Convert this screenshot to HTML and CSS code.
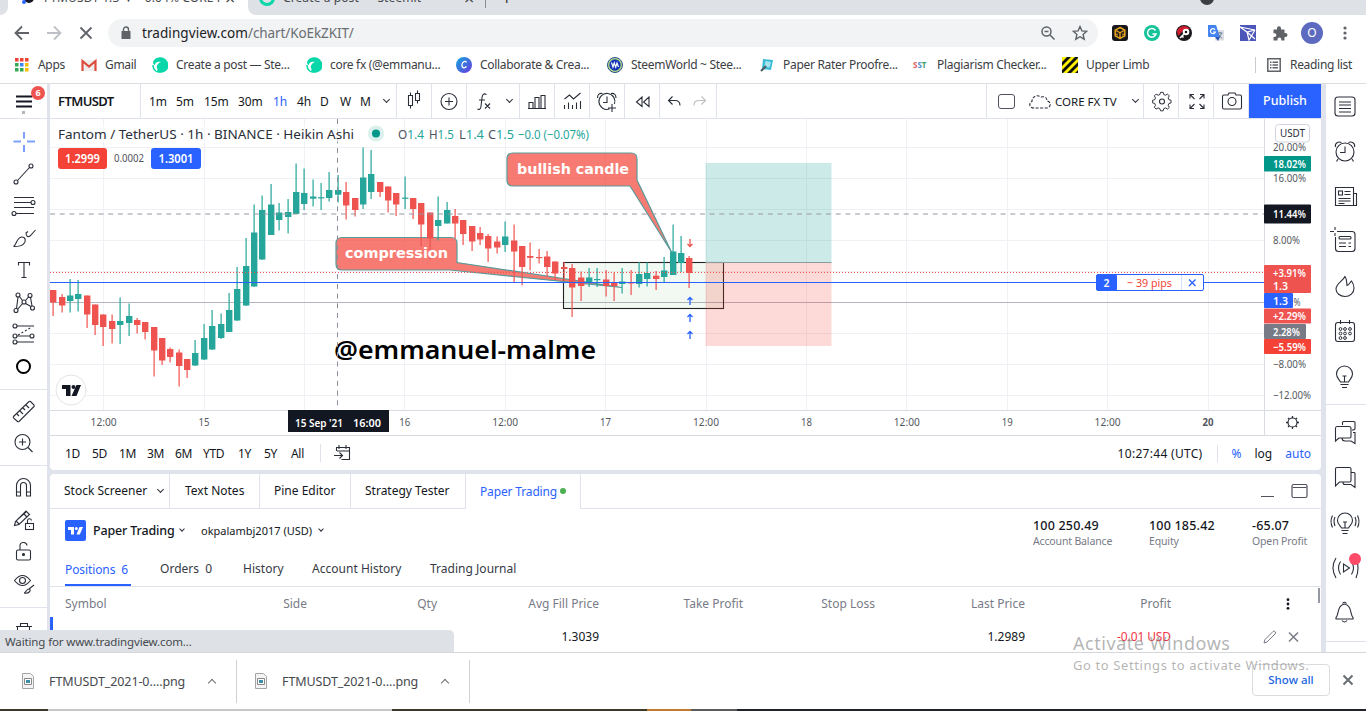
FILE: index.html
```html
<!DOCTYPE html>
<html lang="en">
  <head>
    <meta charset="utf-8">
    <title>FTMUSDT 1.3 — CORE FX TV</title>
    <link rel="stylesheet" href="styles.css">
  </head>
  <body>
    <!-- browser chrome -->
    <div class="tabstrip">
      <div class="tab tab-left"></div>
      <div class="tab tab-active">
        <svg class="tab-ico" width="16" height="16" viewBox="0 0 16 16"><circle cx="9" cy="8" r="5" fill="#131722"/><circle cx="4" cy="12" r="2" fill="#2962ff"/></svg>
        <span class="tab-text">FTMUSDT 1.3 ▼ −0.04% CORE FX</span>
        <span class="tab-x">×</span>
      </div>
      <div class="tab tab-idle">
        <svg class="tab-ico" width="16" height="16" viewBox="0 0 16 16"><circle cx="8" cy="8" r="6.5" fill="none" stroke="#07d7a9" stroke-width="3"/></svg>
        <span class="tab-text">Create a post — Steemit</span>
        <span class="tab-x">×</span>
      </div>
      <div class="tab-new">+</div>
      <div class="tab-dot"></div>
    </div>

    <div class="toolbar">
      <svg width="104" height="34" viewBox="0 0 104 34" fill="none" stroke="#5f6368" stroke-width="1.8">
        <path d="M29 18H16M22 11.500l-6.500 6.500 6.500 6.500"/>
        <path d="M47 18h13M54 11.500l6.500 6.500-6.500 6.500" stroke="#bdc1c6"/>
        <path d="M80.500 12.500l11 11M91.500 12.500l-11 11"/>
      </svg>
      <div class="omnibox">
        <svg width="10" height="14" viewBox="0 0 10 14"><path d="M0.500 5h9v8h-9z" fill="#5f6368"/><path d="M2.500 6V3.500a2.500 2.500 0 0 1 5 0V6" fill="none" stroke="#5f6368" stroke-width="1.400"/></svg>
        <span class="url"><b>tradingview.com</b>/chart/KoEkZKIT/</span>
        <svg width="16" height="16" viewBox="0 0 16 16" fill="none" stroke="#5f6368" stroke-width="1.500"><circle cx="6.500" cy="6.500" r="4.500"/><path d="M10 10l4.500 4.500M4.500 6.500h4"/></svg>
        <svg width="16" height="16" viewBox="0 0 16 16" fill="none" stroke="#5f6368" stroke-width="1.400"><path d="M8 1.500l1.900 4.400 4.800.4-3.600 3.200 1.100 4.700L8 11.700l-4.200 2.500 1.100-4.700L1.300 6.300l4.800-.4z"/></svg>
      </div>
      <div class="extensions">
        <svg width="16" height="16" viewBox="0 0 16 16"><rect width="16" height="16" rx="3" fill="#17181c"/><path d="M8 2.500l4.800 2.700v5.600L8 13.500l-4.800-2.700V5.200z" fill="none" stroke="#f0a81c" stroke-width="1.500"/><path d="M4 5.500l4 2.300 4-2.300M8 8v5M5 8.500v2M11 8.500v2" stroke="#f0a81c" stroke-width="1.300" fill="none"/></svg>
        <svg width="16" height="16" viewBox="0 0 16 16"><circle cx="8" cy="8" r="8" fill="#15c39a"/><path d="M11.500 5.500A4.300 4.300 0 1 0 12 9H8.500" fill="none" stroke="#fff" stroke-width="1.500"/></svg>
        <svg width="16" height="16" viewBox="0 0 16 16"><circle cx="8" cy="8" r="8" fill="#1b1b1f"/><path d="M1 6a7.500 7.500 0 0 1 13-2L8 5 2 11z" fill="#d21d30"/><circle cx="10" cy="7" r="2.300" fill="none" stroke="#fff" stroke-width="2"/><path d="M8.500 8.500L4 13M6 11l1.500 1.500" stroke="#fff" stroke-width="1.700"/></svg>
        <svg width="16" height="16" viewBox="0 0 16 16"><rect x="7" y="5" width="9" height="10.500" fill="#dcdfe3"/><path d="M0 0h8l4 12H1a1 1 0 0 1-1-1z" fill="#4384f3"/><path d="M7 4.800A2.500 2.500 0 1 0 7.300 7H5" fill="none" stroke="#fff" stroke-width="1.200"/><path d="M9.500 8h5M12 7v1M13.500 8c-.5 2-1.500 3.500-3 4.500M11 10l3 3.500" fill="none" stroke="#6a7d98"/><path d="M7 12h5l-2 4z" fill="#2a55b8"/></svg>
        <svg width="16" height="16" viewBox="0 0 16 16"><rect width="16" height="16" fill="#4c55b8"/><path d="M0 2l15 3-8 2zM7 7l2 8 6-10M7 7l8 7" fill="none" stroke="#fff" stroke-width="1.200"/></svg>
        <svg width="16" height="16" viewBox="0 0 16 16"><path d="M1.500 4.500H5V3.300a2 2 0 0 1 4 0v1.200h3.500V8h1a2 2 0 0 1 0 4h-1v3.500H9.300v-1a1.900 1.900 0 0 0-3.800 0v1h-4V12h1a1.900 1.900 0 0 0 0-3.800h-1z" fill="#5f6368"/></svg>
      </div>
      <div class="avatar">O</div>
      <svg width="4" height="14" viewBox="0 0 4 14" fill="#5f6368"><circle cx="2" cy="2" r="1.600"/><circle cx="2" cy="7" r="1.600"/><circle cx="2" cy="12" r="1.600"/></svg>
    </div>

    <div class="bookmarks">
      <svg width="14" height="14" viewBox="0 0 14 14"><path d="M0 0h3.500v3.500H0zM5 0h3.500v3.500H5zM10 0h3.500v3.500H10z" fill="#ea4335"/><path d="M0 5h3.500v3.500H0zM0 10h3.500v3.500H0zM5 10h3.500v3.500H5z" fill="#34a853"/><path d="M5 5h3.500v3.500H5z" fill="#4285f4"/><path d="M10 5h3.500v3.500H10zM10 10h3.500v3.500H10z" fill="#fbbc05"/></svg>
      <span>Apps</span>
      <svg width="16" height="16" viewBox="0 0 16 16"><path d="M1 3h14v11H1z" fill="#eee"/><path d="M1.500 14V4L8 9.500 14.500 4v10" fill="none" stroke="#dd4b3e" stroke-width="2.200"/></svg>
      <span>Gmail</span>
      <svg width="16" height="16" viewBox="0 0 16 16"><path d="M1 5A8 8 0 0 1 15 4a7 7 0 0 1-3 11c-5 2-8 0-9-1 3 0 3-1 2-3-1-2 1-5 4-6-4-1-6 1-6 3C2 8 1 7 1 5z" fill="#07d7a9"/><path d="M1 8c0 3 1 5 3 6" fill="none" stroke="#07d7a9" stroke-width="1.500"/></svg>
      <span>Create a post — Ste...</span>
      <svg width="16" height="16" viewBox="0 0 16 16"><path d="M1 5A8 8 0 0 1 15 4a7 7 0 0 1-3 11c-5 2-8 0-9-1 3 0 3-1 2-3-1-2 1-5 4-6-4-1-6 1-6 3C2 8 1 7 1 5z" fill="#07d7a9"/><path d="M1 8c0 3 1 5 3 6" fill="none" stroke="#07d7a9" stroke-width="1.500"/></svg>
      <span>core fx (@emmanu...</span>
      <svg width="16" height="16" viewBox="0 0 16 16"><defs><linearGradient id="cv" x1="0" y1="0" x2="1" y2="1"><stop offset="0" stop-color="#12a8dc"/><stop offset="1" stop-color="#6a38e0"/></linearGradient></defs><circle cx="8" cy="8" r="8" fill="url(#cv)"/><path d="M10.500 5.500c-1-2-4-1-4.500 2s2 4.500 4.500 2" fill="none" stroke="#fff" stroke-width="1.300"/></svg>
      <span>Collaborate &amp; Crea...</span>
      <svg width="16" height="16" viewBox="0 0 16 16"><circle cx="8" cy="8" r="7.500" fill="#b9dc82" stroke="#24508c"/><circle cx="8" cy="8" r="5.700" fill="#1536b8"/><path d="M4.500 5.500L6 10l1.300-4L8.700 10 10 6l1.500 4" fill="none" stroke="#fff" stroke-width="1.200"/></svg>
      <span>SteemWorld ~ Stee...</span>
      <svg width="16" height="16" viewBox="0 0 16 16"><path d="M4 2l10 1-2 10-9-1z" fill="#38bcd6"/><path d="M6.500 4l5.500 1-1.500 5.500-5-1z" fill="#a6e3ee"/><path d="M7 9l-5 5" stroke="#4c5a62" stroke-width="2"/></svg>
      <span>Paper Rater Proofre...</span>
      <b class="sst"><i class="s1">S</i><i class="s2">S</i><i class="s3">T</i></b>
      <span>Plagiarism Checker...</span>
      <svg width="16" height="16" viewBox="0 0 16 16"><path d="M0 0h16v16H0z" fill="#fdf100"/><path d="M0 5l5-5h4L0 9zM0 13L13 0h3v1L1 16H0zM5 16L16 5v4l-7 7zM13 16l3-3v3z" fill="#111"/></svg>
      <span>Upper Limb</span>
      <div class="reading">
        <svg width="14" height="14" viewBox="0 0 14 14" fill="none" stroke="#5f6368" stroke-width="1.500"><path d="M.8.800h12.400v12.400H.8zM3 4.200h1.500M3 7h1.500M3 9.800h1.500M5.500 4.200H11M5.500 7H11M5.500 9.800H11"/></svg>
        <span>Reading list</span>
      </div>
    </div>

    <div class="app">
      <!-- drawing tools -->
      <div class="tools">
        <div class="menu">
          <svg width="18" height="20" viewBox="0 0 18 20"><path d="M1 2.500h16M1 7.500h16M1 12.500h16" stroke="#131722" stroke-width="2"/><rect x="7" y="17" width="3" height="3" fill="#b2b5be"/></svg>
          <span class="menu-badge">6</span>
        </div>
        <div class="tool-group">
          <svg viewBox="0 0 28 28"><path d="M14 4v6.500M14 17v7M3.500 13.500H11M17 13.500h8" stroke="#7da0ff" stroke-width="2"/></svg>
          <svg viewBox="0 0 28 28"><circle cx="6" cy="22" r="2"/><circle cx="21" cy="6" r="2"/><path d="M7.500 20.500l12-13"/></svg>
          <svg viewBox="0 0 28 28"><path d="M4 5.500h20M4 10.500h17M4 15.500h20M6 21.500h18" /><circle cx="23" cy="10.500" r="2" fill="#fff"/><circle cx="4" cy="21.500" r="2" fill="#fff"/></svg>
          <svg viewBox="0 0 28 28"><path d="M3.500 22.500c3-1 3-9 8-9.500 4-.3 5 4 2 7-2 2.500-6 2.500-10 2.500zM16 8.500c0 4 2 5 4 3.500l5.500-6M16 9l2-1.500"/></svg>
          <svg viewBox="0 0 28 28"><path d="M8.500 9.500v-3h11v3M14 6.500v15M11.500 21.500h5"/></svg>
          <svg viewBox="0 0 28 28"><circle cx="6" cy="22.500" r="2"/><circle cx="8" cy="7" r="2"/><circle cx="14" cy="14" r="2"/><circle cx="20" cy="7.500" r="2"/><circle cx="22.500" cy="20" r="2"/><path d="M6.500 20.500L8 9M9.500 8.500l3 4M15.500 12.500l3-3.500M20.500 9.500l1.500 8.500M7.500 21.500l5-6M15.500 15.500l5.500 3"/></svg>
          <svg viewBox="0 0 28 28"><path d="M6 6h18M6 16h14M6 22h18"/><path d="M8 15L22 7" stroke-dasharray="2 2"/><circle cx="5" cy="6" r="2" fill="#fff"/><circle cx="5" cy="16" r="2" fill="#fff"/><circle cx="22" cy="16" r="2" fill="#fff"/><circle cx="5" cy="22" r="2" fill="#fff"/></svg>
          <svg viewBox="0 0 28 28"><circle cx="13.500" cy="14.500" r="6.500" stroke="#000" stroke-width="2"/></svg>
        </div>
        <div class="tool-group">
          <svg viewBox="0 0 28 28"><path d="M3.500 19.500L19 4.500q1-.5 1.500 0l3.500 3.500q.5 1 0 1.500L9 24.500q-1 .5-1.500 0L3.500 21q-.5-.7 0-1.500zM7 17l2 2M10 14l3 3M13 11l2 2M16 8l3 3"/></svg>
          <svg viewBox="0 0 28 28"><circle cx="12.500" cy="13" r="7.500"/><path d="M12.500 9.500v7M9 13h7M18 18.500l4.500 4.500"/></svg>
        </div>
        <div class="tool-group">
          <svg viewBox="0 0 28 28"><path d="M7 22.500V12a6.500 6.500 0 0 1 14 0v10.500h-4V12a2.500 2.500 0 0 0-6 0v10.500zM7 18.500h4M17 18.500h4" transform="translate(-.5 -.5)"/></svg>
          <svg viewBox="0 0 28 28"><path d="M4.500 19.500l1-4L16 5l3.500 3.500L9 18.500zM13.500 7.500L17 11M6 15l3 3M8 13l8-7"/><rect x="15.500" y="17.500" width="8" height="6"/><path d="M17.500 17v-2a2 2 0 0 1 4-.5M19.500 20v1"/></svg>
          <svg viewBox="0 0 28 28"><rect x="6.500" y="12" width="14" height="10" rx="1.500"/><path d="M10 12V8.500a3.500 3.500 0 0 1 7-1"/><circle cx="13.500" cy="16.500" r="1" fill="#2a2e39"/></svg>
          <svg viewBox="0 0 28 28"><path d="M4.500 10.500q8-10 16 0-8 10-16 0z"/><circle cx="12.500" cy="10.500" r="3"/><path d="M14 23c2 0 2-4 5-4 3 1 0 5-5 4zM19 19l5-4"/></svg>
        </div>
        <div class="tool-group">
          <svg viewBox="0 0 28 28"><path d="M6 9.500h16M10.500 9V6.500h7V9M7.500 9.500v12h12v-12M11.500 13v6M15.500 13v6"/></svg>
        </div>
      </div>

      <div class="center">
        <div class="chart-area">
          <div class="topbar">
            <div class="cell symbol">FTMUSDT</div>
            <div class="cell intervals"><span>1m</span><span>5m</span><span>15m</span><span>30m</span><span class="on">1h</span><span>4h</span><span>D</span><span>W</span><span>M</span><i class="chev"></i></div>
            <div class="cell ic"><svg viewBox="0 0 28 28"><path d="M8.500 9.500h4v10h-4zM10.500 6.500v3M10.500 19.500v3M15.500 7.500h4v7h-4zM17.500 4.500v3M17.500 14.500v3" transform="translate(0 -1)"/></svg></div>
            <div class="cell ic"><svg viewBox="0 0 28 28"><circle cx="14" cy="14.500" r="8"/><path d="M14 10.500v8M10 14.500h8"/></svg></div>
            <div class="cell fx"><svg viewBox="0 0 28 28"><path d="M15.500 7.500c-3-1.500-4 0-4.500 3l-1 9c-.5 3-2 3.500-3.500 2.500M8 13h6M14 16.500l5 5M19 16.500l-5 5"/></svg><i class="chev"></i></div>
            <div class="cell ic"><svg viewBox="0 0 28 28"><path d="M6 21.500v-6h4v6zM12 21.500v-11h4v11zM18 21.500v-13h4v13zM5 21.500h18" /></svg></div>
            <div class="cell ic"><svg viewBox="0 0 28 28"><path d="M6.500 12l5-4 4 4 7-6M6.500 18v4M10.500 15.500V22M14.500 18v4M18.500 15.500V22M22.500 14v8"/></svg></div>
            <div class="cell ic"><svg viewBox="0 0 28 28"><path d="M16.500 22a8 8 0 1 1 5-5M14 9.500v6h-4M4.500 11c0-4 2-5 5-4.500M23 11c0-4-2-5-5-4.500M19 17v8M15 21h8"/></svg></div>
            <div class="cell ic"><svg viewBox="0 0 28 28"><path d="M14 10v9.500L8.500 15zM21 10v9.500L15.500 15z"/></svg></div>
            <div class="cell undo"><svg viewBox="0 0 28 28"><path d="M12.500 9.500l-4 4 4 4M9 13.500h6q5 0 5 5"/></svg><svg class="dim" viewBox="0 0 28 28"><path d="M15.500 9.500l4 4-4 4M19 13.500h-6q-5 0-5 5"/></svg></div>
            <div class="cell grow"></div>
            <div class="cell layout"><i class="square"></i><svg viewBox="0 0 28 28"><path d="M8 21c-5 0-5.500-5-2-6.500 0-5 5-7.500 9-4.500 4-1 6 1 6 4 5 1 4 7-1 7z" stroke-dasharray="3 1.500"/></svg><span>CORE FX TV</span><i class="chev"></i></div>
            <div class="cell ic shift"><svg viewBox="0 0 28 28"><circle cx="14" cy="14.500" r="2.500"/><path d="M12.500 5.500h3l.7 2.500 2 .8 2.300-1.300 2 2-1.300 2.300.8 2 2.500.7v3l-2.500.7-.8 2 1.300 2.300-2 2-2.300-1.300-2 .8-.7 2.500h-3l-.7-2.500-2-.8-2.300 1.300-2-2 1.300-2.300-.8-2-2.500-.7v-3l2.500-.7.8-2-1.300-2.300 2-2 2.300 1.300 2-.8z" transform="translate(1.500 .5) scale(.88)"/></svg></div>
            <div class="cell ic shift"><svg viewBox="0 0 28 28"><path d="M7 11.500v-4h4M7.500 8l4 4M17 7.500h4v4M20.500 8l-4 4M7 17.500v4h4M7.500 21l4-4M17 21.500h4v-4M20.500 21l-4-4"/></svg></div>
            <div class="cell ic shift"><svg viewBox="0 0 28 28"><path d="M10 8l1-2h6l1 2h4q1.500 0 1.500 1.500v11q0 1.500-1.500 1.500H6q-1.500 0-1.500-1.500v-11Q4.500 8 6 8z"/><circle cx="14" cy="14.500" r="4"/></svg></div>
            <div class="publish">Publish</div>
          </div>
          <svg class="chart" id="chart" width="1271" height="317" viewBox="50 119 1271 317"></svg>
          <div class="rangebar">
            <div class="ranges"><span>1D</span><span>5D</span><span>1M</span><span>3M</span><span>6M</span><span>YTD</span><span>1Y</span><span>5Y</span><span>All</span></div>
            <div class="goto"><svg viewBox="0 0 28 28"><path d="M7.500 12V8.500h13v12h-8M10 6v4M17 6v4M8 12h12M5 16.500h8M10.500 13.500l3 3-3 3"/></svg></div>
            <div class="clock">10:27:44 (UTC)</div>
            <div class="scale"><span class="on">%</span><span>log</span><span class="on">auto</span></div>
          </div>
        </div>

        <div class="panel">
          <div class="ptabs">
            <div class="ptab">Stock Screener<i class="chev"></i></div>
            <div class="ptab">Text Notes</div>
            <div class="ptab">Pine Editor</div>
            <div class="ptab">Strategy Tester</div>
            <div class="ptab ptab-on">Paper Trading<i class="live"></i></div>
            <div class="pwin"><svg width="48" height="20" viewBox="4 0 48 20" fill="none" stroke="#50535e" stroke-width="1.200"><path d="M5 15.500h13M36.500 6.500h14"/><rect x="36" y="3.500" width="15" height="13" rx="1.500"/></svg></div>
          </div>
          <div class="broker">
            <svg width="21" height="21" viewBox="0 0 21 21"><rect width="21" height="21" rx="2" fill="#2962ff"/><path d="M3 7h6v7.500H6V10H3zM14.500 7H18l-3.200 7.500h-3.300z" fill="#fff"/><circle cx="11.300" cy="8.500" r="1.500" fill="#fff"/></svg>
            <span class="broker-name">Paper Trading</span><i class="chev small"></i>
            <span class="account">okpalambj2017 (USD)</span><i class="chev small"></i>
            <div class="stats">
              <div><b>100 250.49</b><small>Account Balance</small></div>
              <div><b>100 185.42</b><small>Equity</small></div>
              <div><b>-65.07</b><small>Open Profit</small></div>
            </div>
          </div>
          <div class="subtabs">
            <span class="sub-on">Positions&nbsp; 6</span><span>Orders&nbsp; 0</span><span>History</span><span>Account History</span><span>Trading Journal</span>
          </div>
          <div class="row head">
            <span>Symbol</span><span>Side</span><span>Qty</span><span>Avg Fill Price</span><span>Take Profit</span><span>Stop Loss</span><span>Last Price</span><span>Profit</span>
            <svg width="4" height="12" viewBox="0 0 4 12" fill="#131722"><circle cx="2" cy="1.700" r="1.400"/><circle cx="2" cy="6" r="1.400"/><circle cx="2" cy="10.300" r="1.400"/></svg>
            <i class="scroll"></i>
          </div>
          <div class="row data">
            <span></span><span></span><span></span><span>1.3039</span><span></span><span></span><span>1.2989</span><span class="loss">-0.01 USD</span>
            <svg class="acts" width="40" height="14" viewBox="0 0 40 14" fill="none" stroke="#787b86" stroke-width="1"><path d="M1 13l1-3.500L10 1.500q1.500-1 2.500.5.500 1-.5 2L4 12z"/><path d="M26 2.500l9 9M35 2.500l-9 9" stroke-width="1.500"/></svg>
          </div>
        </div>
      </div>

      <!-- widget bar -->
      <div class="widgets">
        <div class="wgroup">
          <svg viewBox="0 0 28 28"><rect x="4" y="5" width="20" height="19" rx="3"/><path d="M8 10h12M8 13h12M8 16.500h12M8 20h12"/></svg>
          <svg viewBox="0 0 28 28"><circle cx="14" cy="15" r="9"/><path d="M14 9.500v6h-5M4.500 10c-1-4 3-6 6-4.500M23.500 10c1-4-3-6-6-4.500M7 22l-1.500 2.500M21 22l1.500 2.500"/></svg>
          <svg viewBox="0 0 28 28"><path d="M4.500 23.500v-18h18v18zM22.500 11.500h3v12h-3M13.500 9.500h6M13.500 12.500h6M7.500 16.500h12M7.500 19h12M7.500 21.500h6"/><rect x="7.500" y="9" width="4" height="4"/></svg>
          <svg viewBox="0 0 28 28"><path d="M9 4.500h12q3 0 3 3v14q0 3-3 3H7.500q-3 0-3-3V10M4 0v3M4 6v3M-1 4.500h4M6 4.500h3"/><rect x="8" y="9.500" width="12" height="2.500" rx="1"/><path d="M8 16h7M17.500 16H20M8 19.500h7M17.500 19.500H20"/></svg>
          <svg viewBox="0 0 28 28"><path d="M14 4.500C12 9 5 11.500 5 17c0 4 4 7.500 9 7.500s9-3.500 9-8.500c0-3-1-5-2.500-7-1.500 1-2 4-4.500 4.500C15.500 10 16 7 14 4.500z"/></svg>
          <svg viewBox="0 0 28 28"><rect x="4.500" y="5.500" width="19" height="19" rx="2.500"/><path d="M9.500 3v4M18.500 3v4"/><g stroke-width="1"><circle cx="9.500" cy="12" r="1.400"/><circle cx="14" cy="12" r="1.400"/><circle cx="19" cy="12" r="1.400"/><circle cx="9.500" cy="16.500" r="1.400"/><circle cx="14" cy="16.500" r="1.400"/><circle cx="19" cy="16.500" r="1.400"/><circle cx="9.500" cy="21" r="1.400"/><circle cx="14" cy="21" r="1.400"/></g></svg>
          <svg viewBox="0 0 28 28"><path d="M9.500 19c-1-2.500-4-4-4-8a8 8 0 0 1 16 0c0 4-3 5.500-4 8zM9.500 21.500h8M11 24.500h5M11.500 13h4M13.500 13v5.500" transform="translate(0 1)"/></svg>
        </div>
        <div class="wgroup">
          <svg viewBox="0 0 28 28"><path d="M11.500 6V3.500q0-1 1-1h10.500q1 0 1 1v6q0 1.500-3 1.500M6 7.500h12q2 0 2 2v8q0 1.500-1.500 1.500H8l-3.500 3V9.500q0-2 1.500-2zM22 13.500h2v11L20 22h-6q-3 0-3-3"/></svg>
          <svg viewBox="0 0 28 28"><path d="M6 3.500h12.500q1.500 0 1.500 1.500v11.500q0 1.500-1.500 1.500H8.500l-4 4V5q0-1.500 1.500-1.500zM20 8.500h3q1 0 1 1v14l-4-3h-6q-2 0-2-2"/></svg>
          <svg viewBox="0 0 28 28"><path d="M11 19c-1-2.500-4-3.500-4-7.500a7.500 7.500 0 0 1 15 0c0 4-3 5-4 7.500zM11 21.500h7M12 24.500h5M14.500 13.500v5M12.500 13h4M4.500 8q-2 4 0 9M2 6.500q-3 6 0 12M24.500 8q2 4 0 9M27 6.500q3 6 0 12" transform="translate(-.5 0)"/></svg>
          <svg viewBox="0 0 28 28"><path d="M12.500 10v8l6-4zM9.500 7.500q-4 6.500 0 13M5 4q-6 9.500 0 20M20.500 7.500q4 6.500 0 13M25 4q4 9.500 0 20"/><circle cx="24" cy="5" r="6" fill="#ff4a68" stroke="none"/></svg>
          <svg viewBox="0 0 28 28"><path d="M5 19.500c3-3 1-12 8.500-13.500 7.500 1.500 5.500 10.500 8.500 13.500v1.500H5zM11.500 5.500q2-2.500 4 0M11 22.500q2.500 3 5 0" transform="translate(0 -1)"/></svg>
        </div>
        <div class="wgroup"></div>
      </div>

      <div class="status">Waiting for www.tradingview.com...</div>
    </div>

    <div class="shelf">
      <div class="dl"><svg width="12" height="16" viewBox="0 0 12 16"><path d="M.5.500h8l3 3v12H.5z" fill="#f4f4f4" stroke="#a5a5a5"/><path d="M2.500 5.500h7v6h-7z" fill="#fff" stroke="#888"/><path d="M4 7h4v3H4z" fill="#3d8fa8"/></svg><span>FTMUSDT_2021-0....png</span><i class="up"></i></div>
      <div class="dl"><svg width="12" height="16" viewBox="0 0 12 16"><path d="M.5.500h8l3 3v12H.5z" fill="#f4f4f4" stroke="#a5a5a5"/><path d="M2.500 5.500h7v6h-7z" fill="#fff" stroke="#888"/><path d="M4 7h4v3H4z" fill="#3d8fa8"/></svg><span>FTMUSDT_2021-0....png</span><i class="up"></i></div>
      <div class="showall">Show all</div>
      <svg width="12" height="12" viewBox="0 0 12 12"><path d="M1.500 1.500l9 9M10.500 1.500l-9 9" stroke="#6b6e72" stroke-width="2"/></svg>
      <div class="activate"><p class="a1">Activate Windows</p><p class="a2">Go to Settings to activate Windows.</p></div>
    </div>
    <div class="taskbar"><i></i><i class="light"></i><i></i><i class="orange"></i><i class="dark"></i></div>
    <script src="chart.js"></script>
  </body>
</html>
```
FILE: styles.css
```css
body { margin: 0; height: 711px; overflow: hidden; background: #fff; font-family: "Noto Sans", "Open Sans", sans-serif; font-size: 12px; color: #131722 }
svg { display: block; flex: none }
i { font-style: normal }

/* browser chrome */
.tabstrip { display: flex; position: relative; height: 15px; background: linear-gradient(90deg, #fff 260px, #dee1e6 260px); overflow: hidden; font-size: 12px; line-height: 16px; color: #45494d }
.tab { display: flex; box-sizing: border-box; height: 15px }
.tab-left { width: 8px; border-radius: 0 0 8px 0; background: #dee1e6 }
.tab-active { width: 240px; padding-left: 12px; background: #fff }
.tab-idle { width: 239px; padding-left: 11px; border-radius: 0 0 0 8px; background: #dee1e6 }
.tab-ico { margin-top: -10px }
.tab-text { width: 178px; margin: -10px 0 0 8px; white-space: nowrap; overflow: hidden; letter-spacing: .1px }
.tab-x { margin: -10px 0 0 3px; font-size: 18px }
.tab-idle .tab-x { box-sizing: border-box; width: 22px; border-right: 1px solid #8a8d91; height: 18px }
.tab-new { margin: -10px 0 0 14px; font-size: 20px }
.tab-dot { position: absolute; left: 1200px; top: -9px; width: 14px; height: 14px; border-radius: 50%; background: #3c4043 }

.toolbar { display: flex; align-items: center; height: 36px }
.toolbar > svg:first-child { align-self: flex-start; margin-right: 4px }
.omnibox { display: flex; align-items: center; box-sizing: border-box; width: 990px; height: 28px; padding: 0 10px 0 13px; border-radius: 14px; background: #f1f3f4 }
.url { flex: 1; margin-left: 11px; font-size: 13.500px; color: #6a6e73; letter-spacing: -.1px }
.url b { font-weight: 400; color: #202124; letter-spacing: .08px }
.omnibox svg + svg { margin-left: 16px }
.extensions { display: flex; gap: 16px; margin-left: 14px }
.avatar { width: 22px; height: 22px; margin: 0 20px 0 13px; border-radius: 50%; background: #5c6bc0; color: #fff; line-height: 22px; text-align: center; font-size: 12px }

.bookmarks { display: grid; grid-template-columns: 23px 43px 24px 47px 24px 130px 24px 126px 24px 127px 24px 128px 24px 130px 24px 125px 24px 1fr auto; align-items: center; box-sizing: border-box; height: 33px; padding: 0 0 5px 15px; border-bottom: 1px solid #dcdde1; color: #3c4043; white-space: nowrap; letter-spacing: -.3px }
.sst { font-size: 8px; letter-spacing: 0 }
.s1 { color: #e06060 }
.s2 { color: #4a90d0 }
.s3 { color: #3fa070 }
.reading { display: flex; align-items: center; gap: 9px; height: 16px; padding: 0 14px 0 11px; border-left: 1px solid #c8cbd0 }

/* app frame */
.app { display: flex; position: relative; height: 568px; background: #e0e3eb }
.tools { width: 47px; margin-right: 3px; overflow: hidden; background: #fff }
.menu { position: relative; height: 34px; border-bottom: 1px solid #e0e3eb }
.menu svg { padding: 10px 0 0 15px }
.menu-badge { position: absolute; left: 31px; top: 2px; width: 14px; height: 14px; border-radius: 50%; background: #ef5350; color: #fff; font-size: 9px; font-weight: 700; line-height: 14px; text-align: center }
.tool-group { padding: 7px 0; border-bottom: 1px solid #e0e3eb }
.tool-group:nth-child(3) { padding: 5px 0 6px }
.tool-group:nth-child(4) { padding: 6px 0 7px }
.tool-group svg, .wgroup svg { width: 28px; height: 28px; margin: 0 auto; padding: 2px 0; fill: none; stroke: #2a2e39; stroke-width: 1.1 }
.tool-group svg { margin-left: 10px }

.center { width: 1271px; margin-right: 5px }
.chart-area { height: 386px; border-radius: 0 0 4px 4px; background: #fff; overflow: hidden }
.topbar { display: flex; box-sizing: border-box; height: 35px; border-bottom: 1px solid #e0e3eb }
.cell { display: flex; align-items: center; box-sizing: border-box; flex: none; border-right: 1px solid #e0e3eb }
.cell svg, .goto svg { width: 28px; height: 28px; fill: none; stroke: #2a2e39; stroke-width: 1.1 }
.ic { width: 35px; justify-content: center }
.shift { padding-left: 2px }
.symbol { width: 91px; padding-left: 8px; font-size: 13px; font-weight: 600; letter-spacing: -.6px }
.intervals { display: grid; width: 256px; padding-left: 8px; grid-template-columns: 27px 28px 34px 35px 24px 23px 20px 20px 22px 1fr; letter-spacing: -.1px }
.on { color: #2962ff }
.chev { width: 4px; height: 4px; margin: 0 0 3px 3px; border: solid #2a2e39; border-width: 0 1.2px 1.2px 0; transform: rotate(45deg) }
.intervals .chev { margin-left: 2px }
.fx { width: 53px; padding-left: 4px }
.fx .chev { margin-left: 8px }
.undo { width: 57px }
.undo svg + svg { margin-left: -2px }
.dim { opacity: .3 }
.grow { flex: 1 }
.layout { width: 157px; padding-left: 11px }
.square { width: 15px; height: 13px; margin-right: 11px; border: 1px solid #50535e; border-radius: 3px }
.layout span { width: 69px; letter-spacing: 0; font-size: 11.500px; white-space: nowrap }
.layout .chev { margin-left: 9px }
.layout svg { margin-right: 1px }
.publish { width: 72px; height: 34px; background: #2962ff; color: #fff; font-size: 12.500px; font-weight: 500; line-height: 34px; text-align: center }

/* chart */
.grid { stroke: #f0f1f4; stroke-width: 1 }
.axis { stroke: #d9dbe3; stroke-width: 1 }
.up-bar { fill: #26a69a }
.down-bar { fill: #ef5350 }
.lbl { font-size: 11px; fill: #555861 }
.lbl-b { font-size: 11px; font-weight: 600; fill: #fff }
.callout { fill: #f44336; fill-opacity: .7; stroke: #5a9a9a; stroke-width: 1.2 }
.callout-text { font: bold 14.500px "DejaVu Sans", sans-serif; fill: #fff }
.handle { font-size: 26px; font-weight: 600; fill: #000 }

.rangebar { display: flex; align-items: center; height: 34px }
.ranges { display: grid; grid-template-columns: 27px 27px 28px 28px 28px 35px 26px 27px 28px; padding-left: 15px; letter-spacing: -.3px }
.goto { margin-left: 1px; padding-left: 8px; border-left: 1px solid #e0e3eb; height: 18px; display: flex; align-items: center }
.clock { margin-left: auto; padding-right: 14px; letter-spacing: .3px }
.scale { display: flex; gap: 13px; padding: 0 10px 0 14px; border-left: 1px solid #e0e3eb }

/* bottom panel */
.panel { height: 178px; margin-top: 4px; border-radius: 4px 4px 0 0; background: #fff; overflow: hidden }
.ptabs { display: flex; height: 35px }
.ptab { display: flex; align-items: center; box-sizing: border-box; width: 91px; padding: 0 0 1px 14px; border-right: 1px solid #e0e3eb; border-bottom: 1px solid #e0e3eb; white-space: nowrap; letter-spacing: 0 }
.ptab:nth-child(1) { width: 120px }
.ptab:nth-child(2) { width: 90px; padding-left: 15px }
.ptab:nth-child(4) { width: 115px }
.ptab-on { width: 115px; border-bottom: 0; color: #2962ff; letter-spacing: -.15px }
.ptab .chev { margin-left: 11px }
.live { width: 6px; height: 6px; margin-left: 3px; border-radius: 50%; background: #4caf50 }
.pwin { display: flex; flex: 1; align-items: center; justify-content: flex-end; padding-right: 13px; border-bottom: 1px solid #e0e3eb }
.broker { display: flex; align-items: center; height: 43px; padding-left: 15px }
.broker-name { width: 81px; margin-left: 7px; font-size: 12.500px; font-weight: 500; letter-spacing: -.15px; white-space: nowrap }
.account { width: 112px; margin-left: 17px; font-size: 11px; letter-spacing: 0; white-space: nowrap }
.chev.small { margin-left: 6px; width: 3px; height: 3px }
.stats { display: grid; grid-template-columns: 116px 103px 69px; margin-left: auto; padding-top: 6px }
.stats b { display: block; font-size: 12.500px; font-weight: 500; line-height: 16px; letter-spacing: .2px }
.stats small { display: block; font-size: 10.500px; line-height: 15px; color: #787b86; white-space: nowrap; letter-spacing: -.15px }
.subtabs { display: grid; grid-template-columns: 66px 54px 40px 89px 90px; column-gap: 29px; box-sizing: border-box; height: 35px; padding-left: 15px; border-bottom: 1px solid #e0e3eb; line-height: 34px; white-space: nowrap; color: #363a45; letter-spacing: .02px }
.sub-on { color: #2962ff; border-bottom: 2px solid #2962ff; line-height: 35px; height: 32px; letter-spacing: -.1px }
.row { display: grid; grid-template-columns: 62px 180px 130px 162px 144px 132px 150px 146px; position: relative; padding-left: 15px; height: 33px; line-height: 33px; text-align: right; white-space: nowrap }
.row > span:first-child { text-align: left }
.head { color: #787b86 }
.head svg { position: absolute; left: 1236px; top: 11px }
.scroll { position: absolute; left: 1268px; top: 1px; width: 2px; height: 15px; background: #9598a1 }
.data { height: 36px; margin-top: -3px; line-height: 40px; border-left: 3px solid #2962ff; padding-left: 12px }
.data .acts { position: absolute; left: 1210px; top: 13px }
.loss { color: #f23645; letter-spacing: -.1px }

.widgets { width: 40px; background: #fff; overflow: hidden }
.wgroup { padding: 0 0 5px; border-bottom: 1px solid #e0e3eb }
.wgroup + .wgroup { padding: 6px 0 5px }
.wgroup:last-child { border: 0 }
.wgroup svg { padding: 8px 0 9px; margin-left: 5px; overflow: visible }
.status { position: absolute; left: 0; bottom: 0; width: 449px; height: 22px; padding-left: 5px; border-radius: 0 5px 0 0; background: #dee1e6; color: #45494d; font-size: 11.500px; line-height: 23px; letter-spacing: -.13px }

/* downloads */
.shelf { display: flex; align-items: center; position: relative; box-sizing: border-box; height: 57px; border-top: 1px solid #d5d7db; background: #fff }
.dl { display: flex; align-items: center; box-sizing: border-box; width: 233px; height: 43px; padding-left: 18px; border-right: 1px solid #cfd1d4; color: #45494d }
.dl:first-child { width: 237px; padding-left: 22px }
.dl span { width: 138px; margin-left: 15px; font-size: 12.500px; letter-spacing: -.1px; white-space: nowrap }
.up { width: 5px; height: 5px; margin: 4px 0 0 22px; border: solid #6b6e72; border-width: 1.500px 0 0 1.500px; transform: rotate(45deg) }
.showall { box-sizing: border-box; width: 78px; height: 32px; margin: 0 12px 2px auto; border: 1px solid #dadce0; border-radius: 4px; color: #1a66e0; font-size: 11.500px; font-weight: 500; line-height: 30px; text-align: center }
.shelf > svg { margin: 0 12px 2px 0 }
.activate { position: absolute; left: 1073px; top: -23px; color: rgba(130, 130, 130, .6); white-space: nowrap }
.activate p { margin: 0 }
.a1 { font-size: 18px; line-height: 26px; letter-spacing: .55px }
.a2 { font-size: 13px; line-height: 18px; letter-spacing: .6px }
.taskbar { display: flex; height: 2px; background: #20242a }
.taskbar i { width: 48px; background: #3c382b }
.taskbar .light { width: 344px; background: #c8c8c8 }
.taskbar i:nth-child(3) { width: 255px }
.taskbar .orange { width: 44px; background: #c07a30 }
.taskbar .dark { width: 46px; background: #5b5b5b }
```
FILE: chart.js
```js
// high, body top, body bottom, low, u = up / d = down
var bars = [
  [290, 290, 302.5, 316, 'd'], [294, 297, 305.5, 312.5, 'd'], [279, 295.5, 301, 312.5, 'u'], [280, 294, 299, 311.5, 'u'],
  [295.5, 295.5, 314.5, 328, 'd'], [304.5, 304.5, 325, 335, 'd'], [314.5, 314.5, 327, 346, 'd'], [314.5, 321, 329, 343.5, 'd'],
  [297.5, 321, 325, 344, 'u'], [303.5, 316, 323, 336, 'u'], [318, 320, 325, 333.5, 'd'], [322, 322, 332, 339.5, 'd'],
  [327, 327, 350.5, 376.5, 'd'], [338, 338, 360.5, 365, 'd'], [347.5, 349, 357, 362.5, 'd'], [349.5, 352.5, 366, 386.5, 'd'],
  [359, 359, 370, 378, 'd'], [340, 353, 365.5, 366, 'u'], [324, 338, 359.5, 360, 'u'], [310, 326, 349.5, 350, 'u'],
  [313.5, 324, 338, 339, 'u'], [293, 310, 332, 332, 'u'], [267, 289, 320.5, 321, 'u'], [238, 266, 305.5, 306, 'u'],
  [204.5, 232.5, 286.5, 287, 'u'], [195.5, 210, 259.5, 260, 'u'], [184, 204.5, 235, 235, 'u'], [203, 212.5, 220, 230.5, 'u'],
  [199, 212, 217, 233.5, 'u'], [163.5, 192, 214, 214, 'u'], [168.5, 193, 204, 210, 'u'], [179.5, 196.5, 198.7, 206.5, 'u'],
  [183, 197.2, 198.4, 210, 'u'], [172, 190, 198, 201.5, 'u'], [175, 190, 194.7, 202.5, 'u'], [182, 192, 205.5, 219.5, 'd'],
  [198, 198, 210, 216.5, 'd'], [147.5, 177.5, 204.5, 209, 'u'], [150, 174, 192, 199, 'u'], [182, 182, 192, 197, 'd'],
  [186.5, 186.5, 200.5, 212.5, 'd'], [193, 193, 204.5, 216, 'd'], [176.5, 197.6, 198.8, 209, 'u'], [198, 198, 209, 219, 'd'],
  [203, 203, 224.5, 246.5, 'd'], [212.5, 212.5, 238.5, 259.5, 'd'], [196.5, 220, 226, 240.5, 'u'], [202, 210, 223.5, 223.5, 'u'],
  [209, 216, 223.5, 238.5, 'd'], [220, 220, 234, 245, 'd'], [226, 226, 241.5, 251, 'd'], [227, 233, 239.5, 245, 'd'],
  [234, 236, 248.5, 262, 'd'], [236.5, 241.5, 247.5, 253.5, 'd'], [221.5, 236.5, 245, 252, 'u'], [224.5, 240.5, 251.5, 282.5, 'd'],
  [246, 246, 267, 285.5, 'd'], [242.5, 256, 257.8, 270.5, 'd'], [249, 257, 258.2, 263.5, 'd'], [251, 256.5, 267, 277, 'd'],
  [261.5, 261.5, 273.5, 280, 'd'], [262, 267, 269, 281, 'd'], [264, 268, 287.5, 317, 'd'], [271.5, 277.5, 286, 301, 'd'],
  [268, 277.5, 282, 287, 'u'], [268, 279, 280.2, 287, 'u'], [270, 279.5, 286, 296.5, 'd'], [272.5, 282, 286, 301, 'd'],
  [268, 281.5, 284, 293.5, 'u'], [270, 282, 283.5, 295, 'd'], [262, 274, 284, 287.5, 'u'], [262.5, 273, 279, 286.5, 'u'],
  [271, 275.7, 279, 290, 'd'], [257, 270.5, 277, 282.5, 'u'], [224.5, 251.5, 275, 275, 'u'], [236, 253, 263, 272, 'u'],
  [256, 258, 273, 288, 'd']
];
var out = '';

function line(x1, y1, x2, y2, attrs) {
  out += '<line x1="' + x1 + '" y1="' + y1 + '" x2="' + x2 + '" y2="' + y2 + '" ' + attrs + '/>';
}
function rect(x, y, w, h, attrs) {
  out += '<rect x="' + x + '" y="' + y + '" width="' + w + '" height="' + h + '" ' + attrs + '/>';
}
// w is the width that the label takes
function text(x, y, w, str, attrs) {
  out += '<text x="' + x + '" y="' + y + '" textLength="' + w + '" lengthAdjust="spacingAndGlyphs" ' + attrs + '>' + str + '</text>';
}

// grid
[147.5, 178.5, 209.5, 240.5, 271.5, 333.5, 364.5, 395.5].forEach(function (y) { line(50, y, 1264, y, 'class="grid"'); });
for (var g = 0; g < 12; g++) {
  var gx = Math.floor(103.6 + g * 100.4) + 0.5;
  line(gx, 119, gx, 410, 'class="grid"');
}
line(50, 302.5, 1264, 302.5, 'stroke="#b2b5be"');
rect(563.5, 262.5, 160, 46, 'fill="#4caf50" fill-opacity=".07" stroke="#222" stroke-width="1.1"');

// callouts go under the bars
out += '<path class="callout" d="M513 153H631q6 0 6 6V180L671.500 252 630 186H513q-6 0-6-6V159q0-6 6-6z"/>';
out += '<path class="callout" d="M342 237.500H451q6 0 6 6V262.500L622 287.500 450 270H342q-6 0-6-6V243.500q0-6 6-6z"/>';

bars.forEach(function (b, i) {
  var x = Math.round(53.2 + i * 8.37);
  var cls = 'class="' + (b[4] === 'u' ? 'up-bar' : 'down-bar') + '"';
  rect(x - 0.5, b[0], 1.2, b[3] - b[0], cls);
  rect(x - 3, b[1], 6.4, b[2] - b[1], cls);
});
text(517, 174, 112, 'bullish candle', 'class="callout-text"');
text(345, 258, 103, 'compression', 'class="callout-text"');
text(334, 359, 262, '@emmanuel-malme', 'class="handle"');

// long position
rect(705.5, 163, 126, 99.5, 'fill="#009688" fill-opacity=".2"');
rect(705.5, 262.5, 126, 83.5, 'fill="#f44336" fill-opacity=".2"');
line(705.5, 262.5, 831.5, 262.5, 'stroke="#8b9a9e"');

// order marks
out += '<path d="M690 239v7M687.500 244l2.500 2.500 2.500-2.500" fill="none" stroke="#ef5350" stroke-width="1.300"/>';
[297.5, 314.5, 331.5].forEach(function (y) {
  out += '<path d="M690 ' + (y + 7.5) + 'v-7M687.500 ' + (y + 2.5) + 'l2.500-2.500 2.500 2.500" fill="none" stroke="#2962ff" stroke-width="1.300"/>';
});

// price lines and crosshair
line(50, 272.5, 1264, 272.5, 'stroke="#ef5350" stroke-dasharray="1 2"');
line(50, 282.5, 1264, 282.5, 'stroke="#2962ff"');
line(50, 214, 1264, 214, 'stroke="#9598a1" stroke-width="1.2" stroke-dasharray="5 4.7"');
line(337.5, 119, 337.5, 410, 'stroke="#8a8e99" stroke-dasharray="5 4.7"');

// position label
rect(1096.5, 274.5, 107, 16, 'fill="#fff" stroke="#2962ff" rx="1.5"');
rect(1096.5, 274.5, 20.5, 16, 'fill="#2962ff" rx="1.5"');
line(1181.5, 275, 1181.5, 290, 'stroke="#d5e0ff"');
text(1103.5, 286.5, 6, '2', 'class="lbl-b"');
text(1127, 287, 45, '− 39 pips', 'font-size="11.5" fill="#f44336"');
out += '<path d="M1189 279.500l6.500 6.500M1195.500 279.500l-6.500 6.500" stroke="#2962ff" stroke-width="1.400"/>';

// legend
rect(56, 126, 300, 16, 'fill="#fff" fill-opacity=".6"');
text(58, 138.5, 296, 'Fantom / TetherUS · 1h · BINANCE · Heikin Ashi', 'font-size="12.5" fill="#2a2e39"');
out += '<circle cx="376" cy="133.500" r="8" fill="#d9f0ed"/><circle cx="376" cy="133.500" r="4" fill="#009688"/>';
[['O', '1.4', 398, 26], ['H', '1.5', 429, 25], ['L', '1.4', 459, 25], ['C', '1.5', 488, 26]].forEach(function (v) {
  text(v[2], 138.5, v[3], '<tspan fill="#50535e">' + v[0] + '</tspan>' + v[1], 'font-size="12" fill="#26a69a"');
});
text(518, 138.5, 71, '−0.0 (−0.07%)', 'font-size="12" fill="#26a69a"');
rect(58, 148, 49, 21, 'rx="3" fill="#f44336"');
text(65, 163, 35, '1.2999', 'font-size="12" font-weight="600" fill="#fff"');
text(114, 162, 30, '0.0002', 'font-size="10" fill="#50535e"');
rect(151, 148, 50, 21, 'rx="3" fill="#2962ff"');
text(158.5, 163, 35, '1.3001', 'font-size="12" font-weight="600" fill="#fff"');
out += '<circle cx="71" cy="390" r="15" fill="#fff" stroke="#e3e4e8"/><path d="M62 385h8.500v11h-4.500v-7H62zM76.500 385H81l-4.500 11h-5z" fill="#131722"/><circle cx="73.500" cy="387" r="2" fill="#131722"/>';

// price scale
line(1264.5, 119, 1264.5, 435, 'class="axis"');
rect(1275.5, 124.5, 34, 17.5, 'rx="3" fill="#fff" stroke="#d1d4dc"');
text(1280, 137, 25, 'USDT', 'font-size="10.5" fill="#2a2e39"');
[[151, '20.00%', 33], [182, '16.00%', 33], [244, '8.00%', 27], [367.5, '−8.00%', 33], [399, '−12.00%', 38]].forEach(function (p) {
  text(1273, p[0], p[2], p[1], 'class="lbl"');
});
text(1293.5, 306, 7, '%', 'class="lbl"');
[
  [156, 15.5, 47, '#009688', '18.02%', 33], [204.5, 19, 47, '#131722', '11.44%', 33], [265, 28, 47, '#ef5350', '+3.91%', 33],
  [293, 15, 29, '#2962ff', '1.3', 15], [308.5, 15, 47, '#ef5350', '+2.29%', 33], [324, 15, 42, '#787b86', '2.28%', 27],
  [339, 15, 47, '#f44336', '−5.59%', 33]
].forEach(function (p) {
  rect(1264, p[0], p[2], p[1], 'rx="1" fill="' + p[3] + '"');
  text(1273, p[0] + (p[1] > 20 ? 12 : p[1] / 2 + 4), p[5], p[4], 'class="lbl-b"');
});
text(1273, 289.5, 15, '1.3', 'class="lbl-b"');

// time scale
line(50, 410.5, 1321, 410.5, 'class="axis"');
line(50, 435.5, 1321, 435.5, 'class="axis"');
['12:00', '15', '', '16', '12:00', '17', '12:00', '18', '12:00', '19', '12:00', '20'].forEach(function (t, i) {
  if (!t) return;
  var w = t.length > 2 ? 26 : 11;
  text(103.6 + i * 100.4 - w / 2, 426, w, t, 'class="lbl"' + (t === '20' ? ' font-weight="700"' : ''));
});
rect(288, 410, 101, 22, 'fill="#131722"');
text(295, 427, 48, "15 Sep '21", 'class="lbl-b"');
text(353, 427, 28, '16:00', 'class="lbl-b"');
out += '<circle cx="1292.500" cy="422.500" r="4.500" fill="none" stroke="#2a2e39" stroke-width="1.200"/><path d="M1292.500 416v2M1292.500 427v2M1286 422.500h2M1297 422.500h2M1288 418l1.300 1.300M1295.700 425.700l1.300 1.300M1288 427l1.300-1.300M1295.700 419.300l1.300-1.300" stroke="#2a2e39" stroke-width="1.300"/>';

document.getElementById('chart').innerHTML = out;
```
